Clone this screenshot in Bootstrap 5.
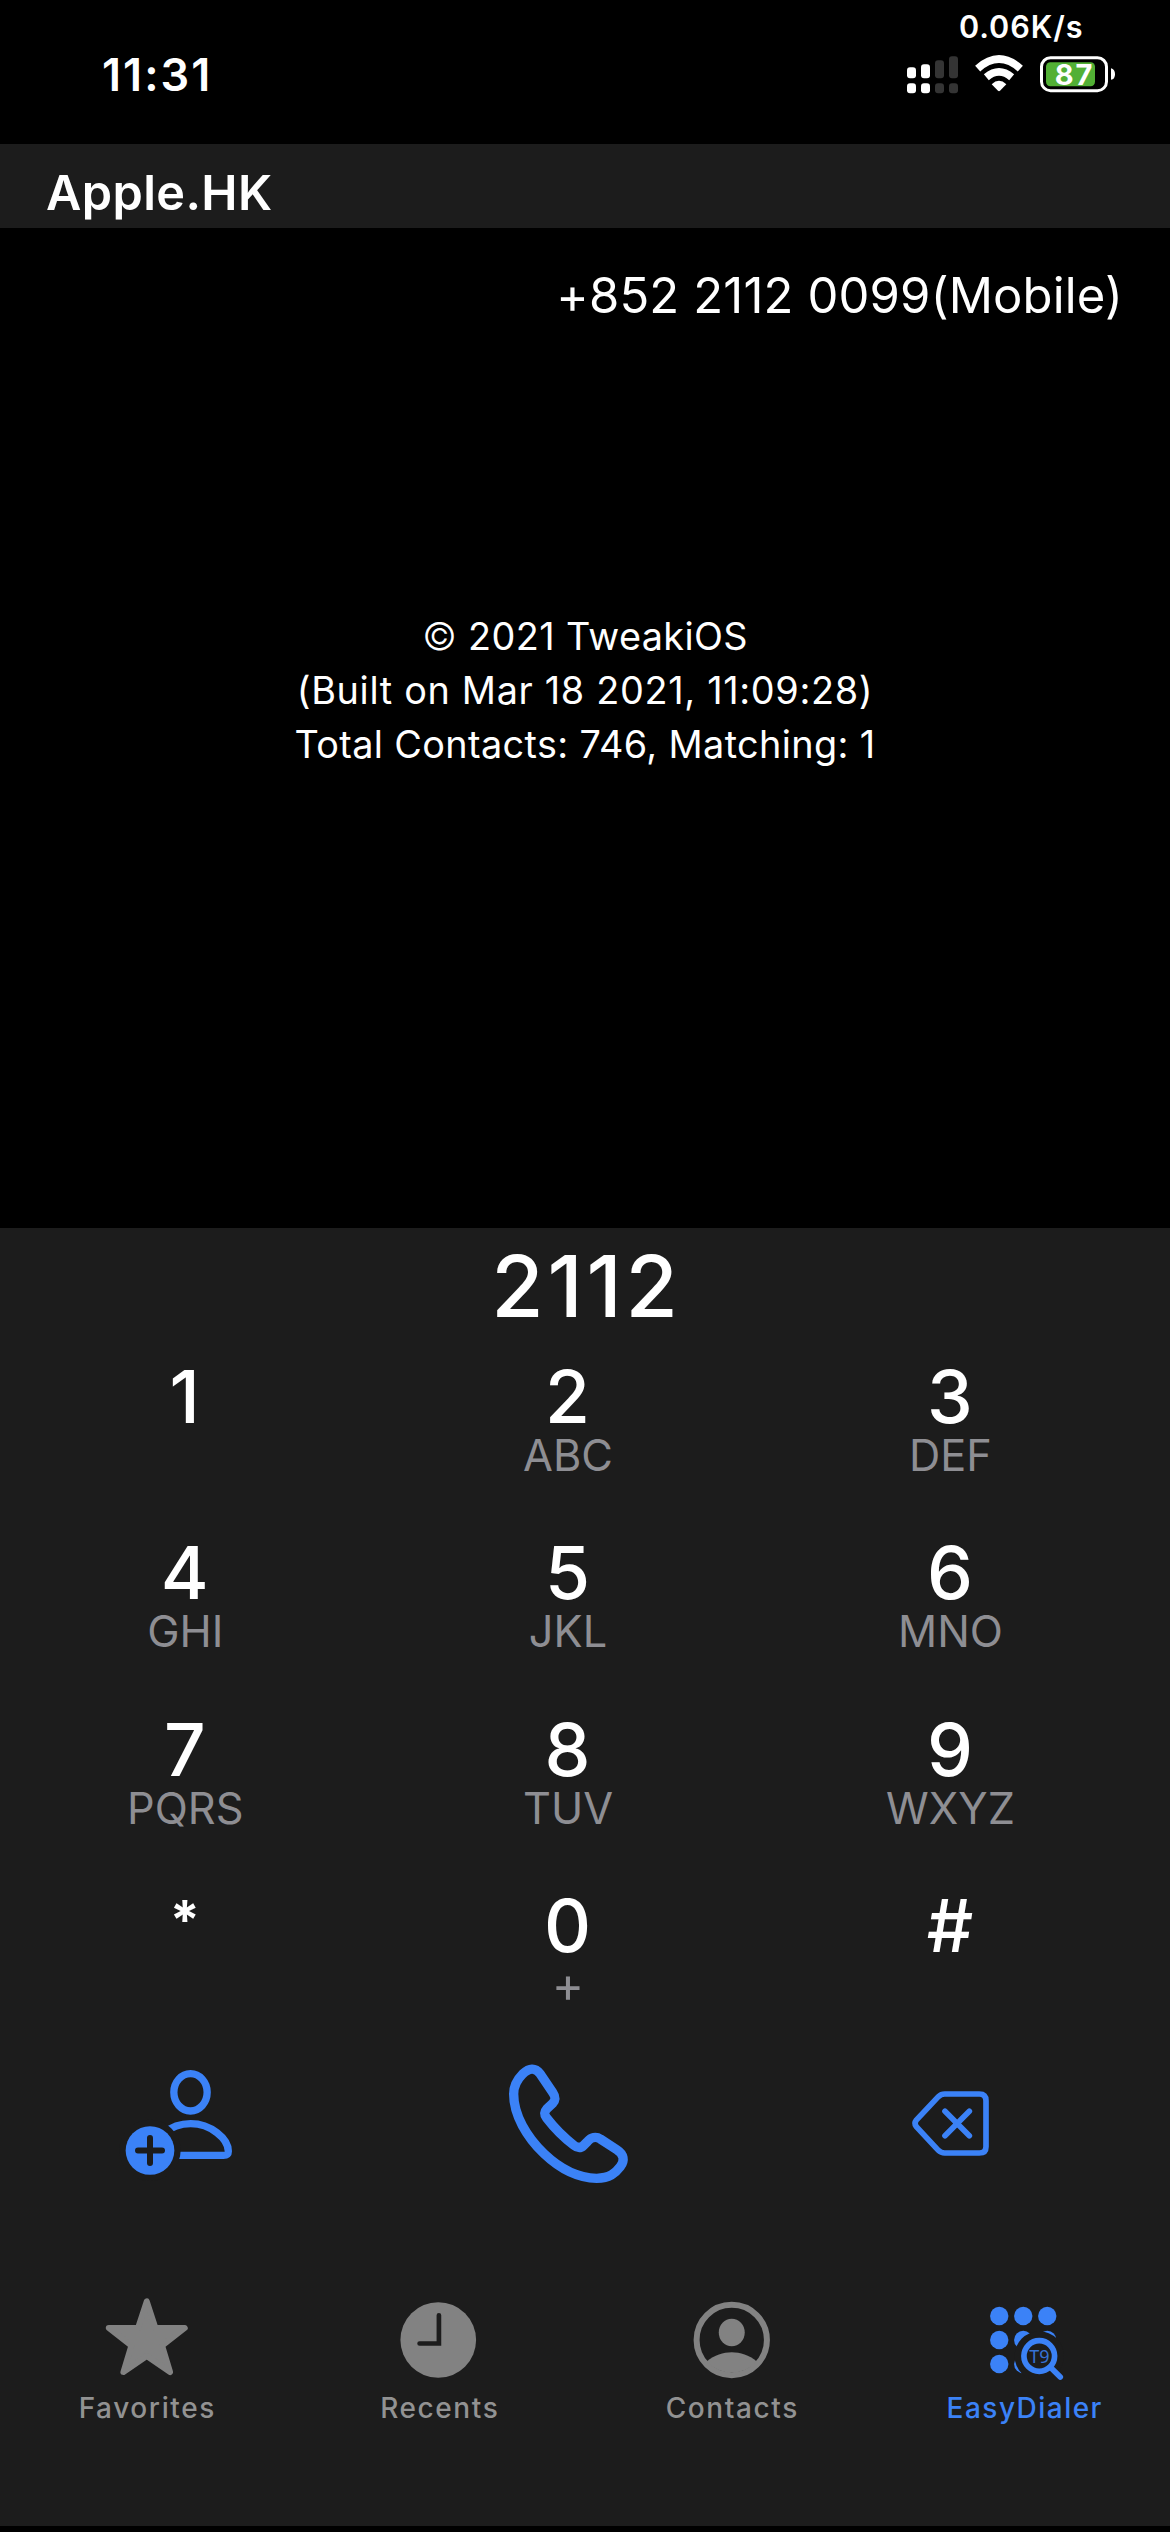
<!DOCTYPE html>
<html lang="en" data-bs-theme="dark">
<head>
<meta charset="utf-8">
<meta name="viewport" content="width=device-width, initial-scale=1">
<title>EasyDialer</title>
<link href="https://cdn.jsdelivr.net/npm/bootstrap@5.3.0/dist/css/bootstrap.min.css" rel="stylesheet">
<style>
:root { --panel: #1c1c1c; --accent: #3b82f7; --glyph: #828282; --sub: #8e8e93; }
body { font-family: Inter, "Liberation Sans", sans-serif; background: #000; color: #fff; margin: 0; }
svg { display: block; overflow: visible; flex: none; }
.phone-screen { width: 1170px; height: 2532px; overflow: hidden; }
.status-strip { height: 144px; }
.clock-text { font-size: 45px; font-weight: 600; letter-spacing: 2.07px; line-height: 48.6px; padding: 51px 0 0 102px; }
.status-side { width: 290px; }
.net-speed { font-size: 30.6px; font-weight: 600; letter-spacing: .94px; line-height: 53.8px; padding-left: 79px; }
.contact-head { height: 84px; background: var(--panel); font-size: 48.6px; font-weight: 600; letter-spacing: .4px; line-height: 66.4px; padding: 16px 0 0 46px; }
.results { height: 1000px; }
.match-number { font-size: 49px; line-height: 60px; letter-spacing: .15px; padding: 38px 47px 0 0; }
.about { font-size: 37.8px; line-height: 54px; letter-spacing: .37px; margin-top: 283px; }
.about .built { letter-spacing: .68px; }
.copy-sign { font-weight: 300; }
.dial-panel { height: 1298px; background: var(--panel); }
.typed { font-size: 85px; font-weight: 500; line-height: 118px; letter-spacing: 3.8px; margin-bottom: 12px; padding-left: 3px; }
.pad-grid { display: grid; grid-template-columns: 382.5px 383px 382px; grid-auto-rows: 176.4px; margin-left: -7px; }
.pad-grid.actions { grid-auto-rows: 124px; margin-top: -.6px; }
.digit { font-size: 73px; font-weight: 500; line-height: 78px; padding-left: 1px; }
.digit.star { font-size: 54px; font-weight: 700; line-height: 65px; padding-bottom: 13px; }
.letters { font-size: 43.3px; line-height: 39.2px; padding-left: 2px; color: var(--sub); }
.letters.plus { font-size: 49px; }
.tabs { margin-top: 103px; }
.tab-label { font-size: 28px; font-weight: 500; line-height: 48px; letter-spacing: 1.6px; padding-left: 2px; color: #929292; }
.tab-label.current { color: var(--accent); letter-spacing: 1.47px; }
</style>
</head>
<body>
<div class="phone-screen d-flex flex-column">
  <header class="status-strip d-flex justify-content-between">
    <div class="clock-text">11:31</div>
    <div class="status-side">
      <div class="net-speed">0.06K/s</div>
      <svg width="290" height="44" viewBox="0 161.4 870 132">
        <g fill="#fff">
          <rect x="81" y="201" width="27" height="33" rx="9"/><rect x="123" y="192" width="27" height="42" rx="9"/>
          <rect x="81" y="249" width="27" height="30" rx="9"/><rect x="123" y="249" width="27" height="30" rx="9"/>
        </g>
        <g fill="#343434">
          <rect x="165" y="180" width="27" height="54" rx="9"/><rect x="207" y="168" width="27" height="66" rx="9"/>
          <rect x="165" y="249" width="27" height="30" rx="9"/><rect x="207" y="249" width="27" height="30" rx="9"/>
        </g>
        <g fill="none" stroke="#fff" stroke-width="23">
          <path d="M293 205Q357 148 421 205"/>
          <path d="M319 231Q357 199 395 231"/>
        </g>
        <path d="M335 252Q357 232 379 252L360 272Q357 274 354 272Z" fill="#fff"/>
        <rect x="484.500" y="172.500" width="195" height="99" rx="27" fill="none" stroke="#fff" stroke-width="9"/>
        <rect x="498" y="186" width="147" height="72" rx="13" fill="#52b035"/>
        <path d="M693 204Q705 207 705 222T693 239Z" fill="#fff"/>
        <text x="524" y="255" font-size="87" font-weight="700" letter-spacing="6" fill="#fff">87</text>
      </svg>
    </div>
  </header>

  <div class="contact-head">Apple.HK</div>
  <main class="results">
    <div class="match-number text-end">+852 2112 0099(Mobile)</div>
    <div class="about text-center">
      <div><span class="copy-sign">©</span> 2021 TweakiOS</div>
      <div class="built">(Built on Mar 18 2021, 11:09:28)</div>
      <div>Total Contacts: 746, Matching: 1</div>
    </div>
  </main>

  <section class="dial-panel">
    <div class="typed text-center">2112</div>
    <div class="pad-grid text-center">
      <div><div class="digit">1</div></div>
      <div><div class="digit">2</div><div class="letters">ABC</div></div>
      <div><div class="digit">3</div><div class="letters">DEF</div></div>
      <div><div class="digit">4</div><div class="letters">GHI</div></div>
      <div><div class="digit">5</div><div class="letters">JKL</div></div>
      <div><div class="digit">6</div><div class="letters">MNO</div></div>
      <div><div class="digit">7</div><div class="letters">PQRS</div></div>
      <div><div class="digit">8</div><div class="letters">TUV</div></div>
      <div><div class="digit">9</div><div class="letters">WXYZ</div></div>
      <div><div class="digit star">*</div></div>
      <div><div class="digit">0</div><div class="letters plus">+</div></div>
      <div><div class="digit">#</div></div>
    </div>
    <div class="pad-grid actions">
      <div class="d-flex justify-content-center">
        <svg width="120" height="124" viewBox="72 69 360 372">
          <g fill="none" stroke="#3b82f7" stroke-width="22">
            <ellipse cx="271.500" cy="157" rx="50" ry="56"/>
            <path d="M190 280C215 260 245 251 272 251C332 251 385 296 385 334Q385 346 370 346H200"/>
          </g>
          <circle cx="150" cy="331" r="92" fill="#1c1c1c"/>
          <circle cx="150" cy="331.500" r="73" fill="#3b82f7"/>
          <path d="M114 331.500H186M150 294V369" stroke="#1c1c1c" stroke-width="18" stroke-linecap="round"/>
        </svg>
      </div>
      <div class="d-flex justify-content-center">
        <svg width="140" height="124" viewBox="21 69 420 372">
          <path d="M71 162C71 135 82 118 98 102C118 84 135 82 150 101L188 157C198 172 197 180 188 190L171 206C162 216 162 224 170 234C193 264 222 293 252 316C262 324 272 325 281 316L293 304C303 292 318 288 331 297L380 329C402 343 405 362 391 380C376 400 359 414 320 415C260 414 205 382 162 341C110 291 71 225 71 162Z" fill="none" stroke="#3b82f7" stroke-width="28" stroke-linejoin="round"/>
        </svg>
      </div>
      <div class="d-flex justify-content-center">
        <svg width="120" height="124" viewBox="-3 9 360 372">
          <g fill="none" stroke="#3b82f7" stroke-width="17" stroke-linecap="round">
            <path d="M161 102H265Q285 102 285 122V260Q285 279 265 279H161Q150 279 142 271L76 200Q68 190 76 180L142 110Q150 102 161 102Z"/>
            <path d="M162 154L235 227M235 154L162 227"/>
          </g>
        </svg>
      </div>
    </div>

    <nav class="tabs row g-0 row-cols-4 text-center">
      <div class="col d-flex flex-column align-items-center">
        <svg width="100" height="94" viewBox="108.750 30 300 282">
          <path d="M261 64L235 144H147L215 197L191 276L261 228L331 276L307 197L375 144H287Z" fill="#828282" stroke="#828282" stroke-width="18" stroke-linejoin="round"/>
        </svg>
        <div class="tab-label">Favorites</div>
      </div>
      <div class="col d-flex flex-column align-items-center">
        <svg width="100" height="94" viewBox="986.250 30 300 282">
          <circle cx="1134" cy="180" r="113.500" fill="#828282"/>
          <path d="M1136 106V190.500H1078" fill="none" stroke="#1c1c1c" stroke-width="14" stroke-linecap="round"/>
        </svg>
        <div class="tab-label">Recents</div>
      </div>
      <div class="col d-flex flex-column align-items-center">
        <svg width="100" height="94" viewBox="123.750 30 300 282">
          <circle cx="276" cy="180" r="105.500" fill="none" stroke="#828282" stroke-width="18"/>
          <ellipse cx="276" cy="157.500" rx="39" ry="41.500" fill="#828282"/>
          <path d="M200 245C225 225 250 217 276 217C302 217 327 225 352 245A105 105 0 0 1 200 245Z" fill="#828282"/>
        </svg>
        <div class="tab-label">Contacts</div>
      </div>
      <div class="col d-flex flex-column align-items-center">
        <svg width="100" height="94" viewBox="1001.250 30 300 282">
          <g fill="#3b82f7">
            <circle cx="1077" cy="108" r="27.500"/><circle cx="1149" cy="108" r="27.500"/><circle cx="1221" cy="108" r="27.500"/>
            <circle cx="1077" cy="180" r="27.500"/><circle cx="1149" cy="180" r="27.500"/><circle cx="1221" cy="180" r="27.500"/>
            <circle cx="1077" cy="252" r="27.500"/><circle cx="1149" cy="252" r="27.500"/>
          </g>
          <circle cx="1197" cy="228" r="74" fill="#1c1c1c"/>
          <circle cx="1197" cy="228" r="46" fill="none" stroke="#3b82f7" stroke-width="17"/>
          <path d="M1232 263L1260 291" stroke="#3b82f7" stroke-width="17" stroke-linecap="round"/>
          <text x="1167" y="250" font-family="Noto Sans, sans-serif" font-size="54" fill="#3672d4">T9</text>
        </svg>
        <div class="tab-label current">EasyDialer</div>
      </div>
    </nav>
  </section>
</div>
<script src="https://cdn.jsdelivr.net/npm/bootstrap@5.3.0/dist/js/bootstrap.bundle.min.js"></script>
</body>
</html>
